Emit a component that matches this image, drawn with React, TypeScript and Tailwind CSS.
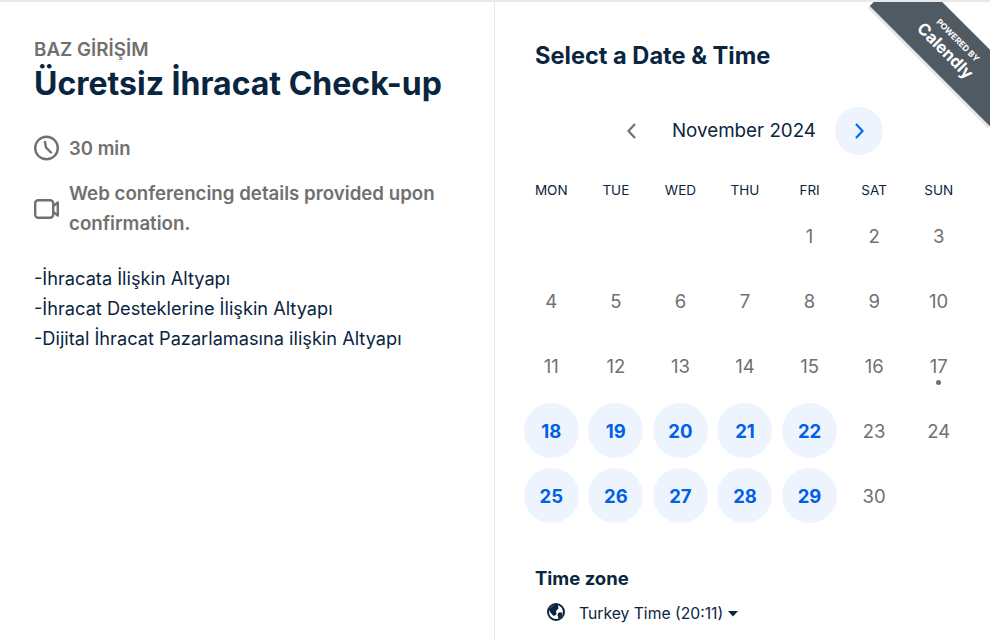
import React from "react";

function Day({ n, active, dot }: { n?: number; active?: boolean; dot?: boolean }) {
  return (
    <div className="flex items-center justify-center h-[65px]">
      {n !== undefined && (
        active ? (
          <div className="w-[55px] h-[55px] rounded-full bg-[#eef4fe] flex items-center justify-center pt-[2px] text-[18.5px] font-bold text-[#0060e6]">{n}</div>
        ) : (
          <div className="relative w-[55px] h-[55px] flex items-center justify-center pt-[2px] text-[18.5px] text-[#72706e]">
            {n}
            {dot && <span className="absolute left-[25px] top-[42px] w-[5px] h-[5px] rounded-full bg-[#72706e]" />}
          </div>
        )
      )}
    </div>
  );
}

export default function App() {
  const active = new Set([18, 19, 20, 21, 22, 25, 26, 27, 28, 29]);
  const days: (number | undefined)[] = [undefined, undefined, undefined, undefined];
  for (let i = 1; i <= 30; i++) days.push(i);
  return (
    <div className="relative w-[990px] h-[639px] overflow-hidden bg-white border-t-2 border-[#e8e8e8] font-['Inter','Liberation_Sans',sans-serif] flex">
      <div className="w-[495px] h-full border-r border-[#e8e8e8] pl-[34px] pr-[40px] pt-[37px] shrink-0">
        <div className="text-[18.8px] leading-[22px] font-semibold text-[#72706e]">BAZ GİRİŞİM</div>
        <h1 className="text-[32px] leading-[40px] font-bold text-[#0a2540] mt-[3px] whitespace-nowrap">Ücretsiz İhracat Check-up</h1>
        <div className="flex items-center gap-[10px] mt-[30px] h-[30px] text-[18.5px] font-semibold text-[#72706e]">
          <svg width="25" height="26" viewBox="0 0 25 26" fill="none" stroke="#72706e" strokeWidth="2.4" strokeLinecap="round" className="shrink-0 -mt-[2px]">
            <circle cx="12.5" cy="13" r="11.3" />
            <path d="M11 7 L12 12.5 L17 17.5" />
          </svg>
          <span>30 min</span>
        </div>
        <div className="flex items-center gap-[10px] mt-[15px] text-[18.7px] leading-[30px] font-semibold text-[#72706e]">
          <svg width="25" height="20" viewBox="0 0 25 20" fill="none" stroke="#72706e" strokeWidth="2.4" strokeLinejoin="round" className="shrink-0">
            <rect x="1.2" y="1.2" width="18" height="17.6" rx="3" />
            <path d="M19.2 7 L23.8 3.5 V16.5 L19.2 13" />
          </svg>
          <span>Web conferencing details provided upon confirmation.</span>
        </div>
        <div className="mt-[24px] text-[18.2px] leading-[30px] text-[#0a2540]">
          <div>-İhracata İlişkin Altyapı</div>
          <div>-İhracat Desteklerine İlişkin Altyapı</div>
          <div>-Dijital İhracat Pazarlamasına ilişkin Altyapı</div>
        </div>
      </div>
      <div className="flex-1 pl-[24px] pr-[19px]">
        <h2 className="ml-[16px] mt-[38px] text-[23.6px] leading-[32px] font-bold text-[#0a2540]">Select a Date &amp; Time</h2>
        <div className="flex items-center justify-center h-[48px] mt-[35px] pl-[12px]">
          <svg width="24" height="24" viewBox="0 0 24 24" fill="none" stroke="#72706e" strokeWidth="2.2" className="mr-[28px] -ml-[2px]"><path d="M15 5 L8.5 12 L15 19" /></svg>
          <span className="text-[18.8px] text-[#0a2540] w-[145px] text-center whitespace-nowrap">November 2024</span>
          <div className="w-[48px] h-[48px] rounded-full bg-[#eef4fe] flex items-center justify-center ml-[18px] mr-[-2px]">
            <svg width="24" height="24" viewBox="0 0 24 24" fill="none" stroke="#0069ff" strokeWidth="2.2"><path d="M9 5 L15.5 12 L9 19" /></svg>
          </div>
        </div>
        <div className="grid grid-cols-7 mt-[25px] text-[13.5px] leading-[20px] text-[#0a2540] text-center h-[21px]">
          {["MON", "TUE", "WED", "THU", "FRI", "SAT", "SUN"].map((d) => <div key={d}>{d}</div>)}
        </div>
        <div className="grid grid-cols-7 mt-[2px]">
          {days.map((n, i) => (
            <Day key={i} n={n} active={n !== undefined && active.has(n)} dot={n === 17} />
          ))}
        </div>
        <div className="ml-[16px] mt-[38px] text-[18.5px] leading-[24px] font-bold text-[#0a2540]">Time zone</div>
        <div className="ml-[28px] mt-[12px] flex items-center text-[15.7px] text-[#0a2540]">
          <svg width="18" height="18" viewBox="0 0 18 18" className="mr-[14px] -mt-[3px]">
            <circle cx="9" cy="9" r="8" fill="#fff" stroke="#0a2540" strokeWidth="2" />
            <path d="M2 6 L7 2 L11 2 L11.5 5.5 L9 8 L9.5 11.5 L6.5 13 L3 9 Z M11.5 9.5 L15.5 9.5 L14.5 14 L11.5 15.5 L10.5 12 Z" fill="#0a2540" />
          </svg>
          <span className="whitespace-nowrap">Turkey Time (20:11)</span>
          <svg width="10" height="6" viewBox="0 0 10 6" className="ml-[5px]"><path d="M0 0 H10 L5 5.5 Z" fill="#0a2540" /></svg>
        </div>
      </div>
      <div className="absolute right-0 top-0 w-[124px] h-[126px] overflow-hidden pointer-events-none">
        <div className="absolute left-[-2px] top-[18px] w-[170px] h-[54px] rotate-45 bg-[#505a62] shadow-[0_3px_0_#e3e3e3] flex flex-col items-center justify-center text-white">
          <div className="text-[8.5px] leading-[10px] font-bold ml-[3px]">POWERED BY</div>
          <div className="text-[16.5px] leading-[22px] font-bold">Calendly</div>
        </div>
      </div>
    </div>
  );
}
